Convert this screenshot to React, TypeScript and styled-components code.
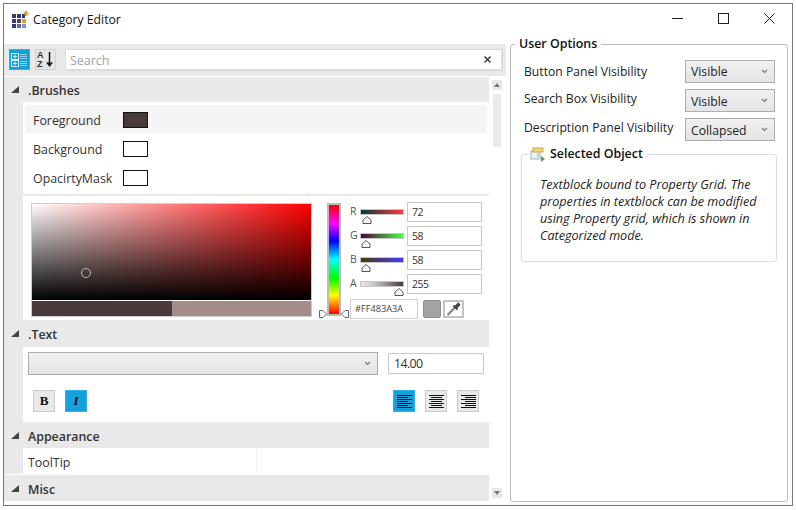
import React from "react";
import styled, { createGlobalStyle } from "styled-components";

const Global = createGlobalStyle`
  html, body { margin: 0; padding: 0; background: #fff; }
  * { box-sizing: border-box; }
  body { font-family: "Open Sans", "Noto Sans", "Liberation Sans", sans-serif; font-size: 12.4px; color: #222; }
`;

const Page = styled.div`
  padding: 3px 0 0 3px;
`;
const Window = styled.div`
  width: 790px;
  height: 503px;
  border: 1px solid #777;
  background: #fff;
  display: flex;
  flex-direction: column;
`;
const TitleBar = styled.div`
  height: 31px;
  flex: none;
  display: flex;
  align-items: flex-start;
  padding: 7px 17px 0 8px;
`;
const TitleText = styled.span`
  padding-top: 1px;
  font-size: 12.2px;
  line-height: 16px;
  color: #111;
`;
const WindowControls = styled.div`
  margin-left: auto;
  display: flex;
  gap: 35px;
  padding-top: 2px;
`;
const Body = styled.div`
  flex: 1;
  display: flex;
  min-height: 0;
`;
const LeftColumn = styled.div`
  width: 502px;
  flex: none;
  padding-top: 9px;
  display: flex;
  flex-direction: column;
`;
const Toolbar = styled.div`
  height: 32px;
  flex: none;
  background: #e9e9e9;
  display: flex;
  align-items: flex-start;
  padding: 5px 0 0 5px;
  gap: 5px;
`;
const ToolButton = styled.div<{ $active?: boolean }>`
  width: 21px;
  height: 21px;
  background: ${p => (p.$active ? "#14a0dc" : "#e6e6e6")};
  border: 1px solid ${p => (p.$active ? "#2ab4ee" : "#d0d0d0")};
  display: flex;
  align-items: center;
  justify-content: center;
`;
const SearchBox = styled.div`
  margin-left: 4px;
  width: 438px;
  height: 22px;
  background: #fff;
  border: 2px solid #dcdcdc;
  border-width: 1px 2px 2px 1px;
  display: flex;
  align-items: center;
  padding: 0 10px 0 4px;
  justify-content: space-between;
`;
const Placeholder = styled.span`
  color: #a2a2a2;
  font-size: 12.4px;
  padding-top: 2px;
`;
const GridArea = styled.div`
  flex: 1;
  display: flex;
  margin-top: 1px;
  min-height: 0;
`;
const PropertyList = styled.div`
  width: 485px;
  flex: none;
  display: flex;
  flex-direction: column;
`;
const CategoryHeader = styled.div<{ $h: number }>`
  height: ${p => p.$h}px;
  flex: none;
  background: #e9e9e9;
  display: flex;
  align-items: center;
  padding-left: 7px;
  font-weight: 600;
  font-size: 12.4px;
  color: #333;
`;
const CategoryName = styled.span`
  margin-left: 9px;
  padding-top: 2px;
`;
const Section = styled.div<{ $h: number }>`
  height: ${p => p.$h}px;
  flex: none;
  border-left: 19px solid #e9e9e9;
  background: #fff;
  display: flex;
  flex-direction: column;
`;
const BrushRows = styled.div`
  height: 94px;
  flex: none;
  padding: 3px 2px 0;
  border-bottom: 2px solid #e9e9e9;
`;
const BrushRow = styled.div<{ $hover?: boolean }>`
  height: 29px;
  display: flex;
  align-items: center;
  padding-left: 8px;
  background: ${p => (p.$hover ? "#f5f5f5" : "transparent")};
  color: #333;
`;
const BrushName = styled.span`
  width: 90px;
  padding-top: 2px;
`;
const Swatch = styled.div<{ $c: string }>`
  width: 25px;
  height: 16px;
  background: ${p => p.$c};
  border: 1px solid #111;
`;
const Picker = styled.div`
  flex: 1;
  display: flex;
  padding: 6px 0 0 8px;
`;
const PickerMain = styled.div`
  width: 281px;
  height: 114px;
  margin-top: 1px;
  border: 1px solid #ccc;
  display: flex;
  flex-direction: column;
  flex: none;
`;
const SatVal = styled.div`
  position: relative;
  height: 96px;
  flex: none;
  background: linear-gradient(to top, #000, rgba(0, 0, 0, 0)), linear-gradient(to right, #fff, #ff0000);
`;
const Cursor = styled.div`
  position: absolute;
  left: 49px;
  top: 64px;
  width: 10px;
  height: 10px;
  border: 1px solid #bbb;
  border-radius: 50%;
`;
const Preview = styled.div`
  height: 15px;
  margin-top: 1px;
  flex: none;
  display: flex;
`;
const PreviewPart = styled.div<{ $c: string; $w: number }>`
  width: ${p => p.$w}px;
  background: ${p => p.$c};
`;
const HueColumn = styled.div`
  position: relative;
  width: 14px;
  height: 113px;
  margin: 1px 0 0 15px;
  flex: none;
  border: 2px solid #bbb;
  background: linear-gradient(to bottom, #ff0000 0%, #ff00ff 17%, #0000ff 33%, #00ffff 50%, #00ff00 67%, #ffff00 83%, #ff0000 100%);
`;
const HueMark = styled.svg<{ $side: "l" | "r" }>`
  position: absolute;
  top: 105px;
  ${p => (p.$side === "l" ? "left: -10px;" : "right: -10px;")}
`;
const Channels = styled.div`
  margin-left: 9px;
  width: 132px;
  flex: none;
  display: flex;
  flex-direction: column;
  gap: 4px;
`;
const ChannelRow = styled.div`
  height: 20px;
  display: flex;
  align-items: flex-start;
`;
const ChannelLabel = styled.span`
  width: 10px;
  font-size: 10.5px;
  line-height: 19px;
  color: #555;
`;
const TrackWrap = styled.div`
  position: relative;
  width: 44px;
  height: 20px;
  margin-right: 3px;
  padding-top: 7px;
`;
const Track = styled.div<{ $bg: string }>`
  height: 6px;
  border: 1px solid #c4c4c4;
  background: ${p => p.$bg};
`;
const Thumb = styled.svg<{ $x: number }>`
  position: absolute;
  left: ${p => p.$x}px;
  top: 14px;
`;
const ChannelInput = styled.div`
  width: 75px;
  height: 20px;
  border: 1px solid #c8c8c8;
  padding-left: 4px;
  font-size: 10.5px;
  letter-spacing: -0.5px;
  line-height: 18px;
  color: #333;
`;
const HexRow = styled.div`
  margin-top: 1px;
  display: flex;
  align-items: flex-start;
`;
const HexInput = styled.div`
  width: 68px;
  height: 20px;
  border: 1px solid #d0d0d0;
  padding-left: 4px;
  font-size: 9.2px;
  line-height: 18px;
  color: #444;
`;
const HexSwatch = styled.div`
  width: 18px;
  height: 18px;
  margin: 1px 2px 0 5px;
  background: #a3a3a3;
  border: 1px solid #8f8f8f;
  border-radius: 2px;
`;
const Dropper = styled.div`
  width: 21px;
  height: 18px;
  margin-top: 1px;
  background: #fff;
  border: 2px solid #c4c4c4;
  display: flex;
  align-items: center;
  justify-content: center;
`;
const TextSection = styled.div`
  flex: 1;
  display: flex;
  flex-direction: column;
  padding: 5px 5px 0;
`;
const FontRow = styled.div`
  display: flex;
  gap: 10px;
  align-items: center;
`;
const ComboBox = styled.div<{ $w: number; $h: number }>`
  width: ${p => p.$w}px;
  height: ${p => p.$h}px;
  flex: none;
  background: linear-gradient(to bottom, #f0f0f0, #e5e5e5);
  border: 1px solid #acacac;
  display: flex;
  align-items: center;
  justify-content: space-between;
  padding: 0 6px 0 5px;
  color: #222;
`;
const SizeInput = styled.div`
  width: 96px;
  height: 21px;
  border: 1px solid #c8c8c8;
  border-radius: 1px;
  padding-left: 5px;
  line-height: 19px;
  letter-spacing: -0.6px;
  color: #333;
`;
const FormatRow = styled.div`
  margin-top: 15px;
  padding: 0 5px 0 5px;
  display: flex;
  justify-content: space-between;
`;
const FormatGroup = styled.div`
  display: flex;
  gap: 10px;
`;
const FormatButton = styled.div<{ $active?: boolean }>`
  width: 22px;
  height: 22px;
  background: ${p => (p.$active ? "#14a0dc" : "#e9e9e9")};
  border: 1px solid ${p => (p.$active ? "#2ab4ee" : "#ccc")};
  display: flex;
  align-items: center;
  justify-content: center;
  font-family: "Liberation Serif", serif;
  font-size: 13px;
  color: #111;
`;
const BoldGlyph = styled.span`
  font-weight: 700;
`;
const ItalicGlyph = styled.span`
  font-style: italic;
  font-weight: 700;
`;
const TooltipRow = styled.div`
  height: 26px;
  flex: none;
  border-left: 19px solid #e9e9e9;
  background: #fff;
  display: flex;
  align-items: center;
  margin-bottom: 1px;
  padding-left: 5px;
  color: #333;
`;
const TooltipName = styled.span`
  width: 229px;
  height: 100%;
  line-height: 29px;
  border-right: 1px solid #f0f0f0;
`;
const Scrollbar = styled.div`
  width: 10px;
  height: 418px;
  margin: 3px 0 0 3px;
  flex: none;
  display: flex;
  flex-direction: column;
  align-items: center;
`;
const ScrollButton = styled.div`
  width: 10px;
  height: 10px;
  flex: none;
  background: #e9e9e9;
  display: flex;
  align-items: center;
  justify-content: center;
`;
const ScrollTrack = styled.div`
  flex: 1;
  width: 8px;
  padding-top: 4px;
`;
const ScrollThumb = styled.div`
  width: 8px;
  height: 53px;
  background: #e9e9e9;
`;
const RightColumn = styled.div`
  margin-left: 4px;
  width: 278px;
  flex: none;
`;
const Group = styled.fieldset<{ $h: number; $c: string; $mt?: number }>`
  margin: ${p => p.$mt ?? 0}px 0 0;
  padding: 0;
  height: ${p => p.$h}px;
  border: 1px solid ${p => p.$c};
  border-radius: 3px;
  min-width: 0;
`;
const GroupLegend = styled.legend`
  margin-left: 4px;
  padding: 0 4px;
  font-weight: 600;
  font-size: 12.4px;
  line-height: 18px;
  color: #111;
  display: flex;
  align-items: center;
`;
const ObjectLegend = styled(GroupLegend)`
  margin-left: 7px;
  padding: 0 4px 0 1px;
`;
const LegendIcon = styled.svg`
  margin-right: 4px;
`;
const GroupBody = styled.div`
  padding: 7px 12px 0 13px;
  display: flex;
  flex-direction: column;
  gap: 6px;
`;
const OptionRow = styled.div`
  height: 23px;
  display: flex;
  align-items: center;
  justify-content: space-between;
`;
const OptionLabel = styled.span<{ $lift?: boolean }>`
  padding-bottom: ${p => (p.$lift ? 4 : 0)}px;
  font-size: 12.2px;
  color: #222;
`;
const ComboText = styled.span<{ $drop?: boolean }>`
  padding-top: ${p => (p.$drop ? 2 : 0)}px;
  font-size: 12.2px;
`;
const InnerSpace = styled.div`
  margin: 0 -2px 0 -3px;
`;
const Description = styled.p`
  margin: 0;
  padding: 13px 12px 0 18px;
  font-style: italic;
  font-size: 12.6px;
  line-height: 17px;
  color: #222;
`;

const Chevron = () => (
  <svg width="7" height="5" viewBox="0 0 7 5">
    <path d="M1 1 L3.5 3.5 L6 1" fill="none" stroke="#777" strokeWidth="1.2" />
  </svg>
);

const Collapse = () => (
  <svg width="8" height="7" viewBox="0 0 8 7">
    <polygon points="0,7 8,0 8,7" fill="#444" />
  </svg>
);

const ThumbIcon: React.FC<{ x: number }> = ({ x }) => (
  <Thumb $x={x} width="10" height="8" viewBox="0 0 10 8">
    <path d="M5 .5 L9 4 V7.5 H1 V4 Z" fill="#fff" stroke="#444" strokeWidth="0.9" />
  </Thumb>
);

const AlignIcon: React.FC<{ kind: "l" | "c" | "r" }> = ({ kind }) => {
  const lines = [15, 11, 15, 11, 15, 11, 15];
  return (
    <svg width="15" height="13" viewBox="0 0 15 13">
      {lines.map((w, i) => {
        const x = kind === "l" ? 0 : kind === "c" ? (15 - w) / 2 : 15 - w;
        return <rect key={i} x={x} y={i * 2} width={w} height="1" fill="#111" />;
      })}
    </svg>
  );
};

const channels = [
  { l: "R", v: "72", x: 2, bg: "linear-gradient(to right,#003a3a,#ff3a3a)" },
  { l: "G", v: "58", x: 1, bg: "linear-gradient(to right,#480048,#48ff3a)" },
  { l: "B", v: "58", x: 1, bg: "linear-gradient(to right,#483a00,#483aff)" },
  {
    l: "A",
    v: "255",
    x: 34,
    bg: "linear-gradient(to right,#e4e4e4,#d0d0d0 25%,#a9a1a1 50%,#483a3a)",
  },
];

export default function App() {
  return (
    <Page>
      <Global />
      <Window>
        <TitleBar>
          <svg width="21" height="17" viewBox="0 0 21 17">
            <rect x="0" y="3" width="4" height="4" fill="#2e3a7c" />
            <rect x="5" y="3" width="4" height="4" fill="#2e3a7c" />
            <rect x="10" y="3" width="3" height="4" fill="#2e3a7c" />
            <rect x="0" y="8" width="4" height="4" fill="#2e3a7c" />
            <rect x="5" y="8" width="4" height="4" fill="#3c4a8a" />
            <rect x="10" y="8" width="4" height="4" fill="#f09a30" />
            <rect x="0" y="13" width="4" height="4" fill="#2e3a7c" />
            <rect x="5" y="13" width="4" height="4" fill="#5f6a9f" />
            <rect x="10" y="13" width="4" height="4" fill="#8a93ba" />
            <path d="M13 0 h2 v1.5 h1.5 v2 h-1.5 v1.5 h-2 v-1.5 h-1.5 v-2 h1.5z" fill="#f0912a" />
          </svg>
          <TitleText>Category Editor</TitleText>
          <WindowControls>
            <svg width="11" height="11" viewBox="0 0 11 11">
              <rect x="0" y="5" width="11" height="1" fill="#222" />
            </svg>
            <svg width="11" height="11" viewBox="0 0 11 11">
              <rect x="0.5" y="0.5" width="10" height="10" fill="none" stroke="#222" />
            </svg>
            <svg width="11" height="11" viewBox="0 0 11 11">
              <path d="M.5 .5 L10.5 10.5 M10.5 .5 L.5 10.5" stroke="#222" strokeWidth="1" />
            </svg>
          </WindowControls>
        </TitleBar>
        <Body>
          <LeftColumn>
            <Toolbar>
              <ToolButton $active>
                <svg width="17" height="15" viewBox="0 0 17 15">
                  <rect x=".5" y="1.5" width="7" height="6" fill="none" stroke="#d8f0fb" />
                  <path d="M2 4.5 h4 M4 2.5 v4" stroke="#d8f0fb" />
                  <rect x=".5" y="8.5" width="7" height="6" fill="none" stroke="#d8f0fb" />
                  <path d="M2 11.5 h4 M4 9.5 v4" stroke="#d8f0fb" />
                  <path d="M9 2.5 h7 M9 4.5 h7 M9 6.5 h7 M9 9.5 h7 M9 11.5 h7 M9 13.5 h7" stroke="#8ed4f2" />
                </svg>
              </ToolButton>
              <ToolButton>
                <svg width="19" height="19" viewBox="0 0 19 19">
                  <text x="1" y="8" fontSize="9" fontWeight="700" fontFamily="Liberation Sans" fill="#333">A</text>
                  <text x="1" y="17" fontSize="9" fontWeight="700" fontFamily="Liberation Sans" fill="#333">Z</text>
                  <path d="M13.5 2 V14" stroke="#111" strokeWidth="1.5" />
                  <polygon points="10,12.5 17,12.5 13.5,17" fill="#111" />
                </svg>
              </ToolButton>
              <SearchBox>
                <Placeholder>Search</Placeholder>
                <svg width="7" height="7" viewBox="0 0 7 7">
                  <path d="M.5 .5 L6.5 6.5 M6.5 .5 L.5 6.5" stroke="#333" strokeWidth="1.4" />
                </svg>
              </SearchBox>
            </Toolbar>
            <GridArea>
              <PropertyList>
                <CategoryHeader $h={25}>
                  <Collapse />
                  <CategoryName>.Brushes</CategoryName>
                </CategoryHeader>
                <Section $h={218}>
                  <BrushRows>
                    <BrushRow $hover>
                      <BrushName>Foreground</BrushName>
                      <Swatch $c="#483a3a" />
                    </BrushRow>
                    <BrushRow>
                      <BrushName>Background</BrushName>
                      <Swatch $c="#fff" />
                    </BrushRow>
                    <BrushRow>
                      <BrushName>OpacirtyMask</BrushName>
                      <Swatch $c="#fff" />
                    </BrushRow>
                  </BrushRows>
                  <Picker>
                    <PickerMain>
                      <SatVal>
                        <Cursor />
                      </SatVal>
                      <Preview>
                        <PreviewPart $c="#483a3a" $w={140} />
                        <PreviewPart $c="#a38c8a" $w={139} />
                      </Preview>
                    </PickerMain>
                    <HueColumn>
                      <HueMark $side="l" width="8" height="8" viewBox="0 0 8 8">
                        <path d="M.5 .5 H4 L7.5 4 L4 7.5 H.5 Z" fill="#fff" stroke="#555" strokeWidth=".9" />
                      </HueMark>
                      <HueMark $side="r" width="8" height="8" viewBox="0 0 8 8">
                        <path d="M7.5 .5 H4 L.5 4 L4 7.5 H7.5 Z" fill="#fff" stroke="#555" strokeWidth=".9" />
                      </HueMark>
                    </HueColumn>
                    <Channels>
                      {channels.map(c => (
                        <ChannelRow key={c.l}>
                          <ChannelLabel>{c.l}</ChannelLabel>
                          <TrackWrap>
                            <Track $bg={c.bg} />
                            <ThumbIcon x={c.x} />
                          </TrackWrap>
                          <ChannelInput>{c.v}</ChannelInput>
                        </ChannelRow>
                      ))}
                      <HexRow>
                        <HexInput>#FF483A3A</HexInput>
                        <HexSwatch />
                        <Dropper>
                          <svg width="17" height="14" viewBox="0 0 17 14">
                            <path d="M2.5 13 L10 5.5" stroke="#8a8a8a" strokeWidth="2.4" />
                            <path d="M8.5 3.5 L12.5 7.5" stroke="#444" strokeWidth="2" />
                            <path d="M11 5 L14.5 1.5" stroke="#444" strokeWidth="3.2" />
                          </svg>
                        </Dropper>
                      </HexRow>
                    </Channels>
                  </Picker>
                </Section>
                <CategoryHeader $h={27}>
                  <Collapse />
                  <CategoryName>.Text</CategoryName>
                </CategoryHeader>
                <Section $h={75}>
                  <TextSection>
                    <FontRow>
                      <ComboBox $w={350} $h={23}>
                        <span />
                        <Chevron />
                      </ComboBox>
                      <SizeInput>14.00</SizeInput>
                    </FontRow>
                    <FormatRow>
                      <FormatGroup>
                        <FormatButton>
                          <BoldGlyph>B</BoldGlyph>
                        </FormatButton>
                        <FormatButton $active>
                          <ItalicGlyph>I</ItalicGlyph>
                        </FormatButton>
                      </FormatGroup>
                      <FormatGroup>
                        <FormatButton $active>
                          <AlignIcon kind="l" />
                        </FormatButton>
                        <FormatButton>
                          <AlignIcon kind="c" />
                        </FormatButton>
                        <FormatButton>
                          <AlignIcon kind="r" />
                        </FormatButton>
                      </FormatGroup>
                    </FormatRow>
                  </TextSection>
                </Section>
                <CategoryHeader $h={26}>
                  <Collapse />
                  <CategoryName>Appearance</CategoryName>
                </CategoryHeader>
                <TooltipRow>
                  <TooltipName>ToolTip</TooltipName>
                </TooltipRow>
                <CategoryHeader $h={26}>
                  <Collapse />
                  <CategoryName>Misc</CategoryName>
                </CategoryHeader>
              </PropertyList>
              <Scrollbar>
                <ScrollButton>
                  <svg width="6" height="4" viewBox="0 0 6 4">
                    <polygon points="3,0 6,4 0,4" fill="#777" />
                  </svg>
                </ScrollButton>
                <ScrollTrack>
                  <ScrollThumb />
                </ScrollTrack>
                <ScrollButton>
                  <svg width="6" height="4" viewBox="0 0 6 4">
                    <polygon points="0,0 6,0 3,4" fill="#777" />
                  </svg>
                </ScrollButton>
              </Scrollbar>
            </GridArea>
          </LeftColumn>
          <RightColumn>
            <Group $h={467} $c="#bcbcbc">
              <GroupLegend>User Options</GroupLegend>
              <GroupBody>
                <OptionRow>
                  <OptionLabel>Button Panel Visibility</OptionLabel>
                  <ComboBox $w={90} $h={23}>
                    <ComboText>Visible</ComboText>
                    <Chevron />
                  </ComboBox>
                </OptionRow>
                <OptionRow>
                  <OptionLabel $lift>Search Box Visibility</OptionLabel>
                  <ComboBox $w={90} $h={23}>
                    <ComboText $drop>Visible</ComboText>
                    <Chevron />
                  </ComboBox>
                </OptionRow>
                <OptionRow>
                  <OptionLabel $lift>Description Panel Visibility</OptionLabel>
                  <ComboBox $w={90} $h={23}>
                    <ComboText $drop>Collapsed</ComboText>
                    <Chevron />
                  </ComboBox>
                </OptionRow>
                <InnerSpace>
                  <Group $h={117} $c="#d5e0e8" $mt={-2}>
                    <ObjectLegend>
                      <LegendIcon width="16" height="15" viewBox="0 0 16 15">
                        <rect x="1" y="4" width="9" height="8" fill="#eaf1f7" stroke="#9fb2c4" />
                        <rect x="3" y="1" width="10" height="4" fill="#f5d76a" stroke="#c9a94a" />
                        <rect x="7" y="6" width="4" height="6" fill="#c9d6e2" />
                        <polygon points="11,9 15,12 11,15" fill="#5aa050" />
                      </LegendIcon>
                      Selected Object
                    </ObjectLegend>
                    <Description>
                      Textblock bound to Property Grid. The properties in textblock can be modified using Property grid, which is shown in Categorized mode.
                    </Description>
                  </Group>
                </InnerSpace>
              </GroupBody>
            </Group>
          </RightColumn>
        </Body>
      </Window>
    </Page>
  );
}
